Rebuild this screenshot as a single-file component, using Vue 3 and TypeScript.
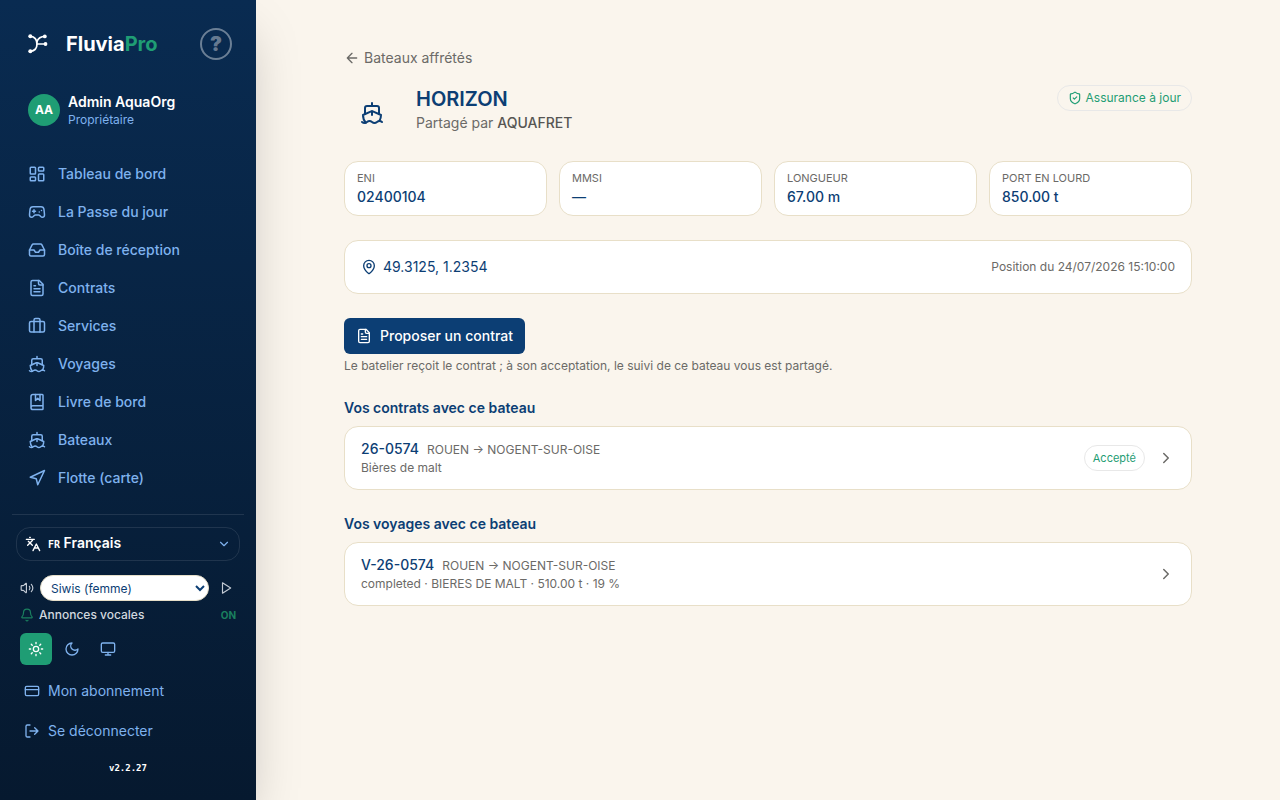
<script setup lang="ts">
import { ref } from 'vue'

interface NavItem {
  label: string
  icon: string
}

interface Spec {
  label: string
  value: string
}

const icons: Record<string, string> = {
  dashboard:
    '<rect width="7" height="9" x="3" y="3" rx="1"/><rect width="7" height="5" x="14" y="3" rx="1"/><rect width="7" height="9" x="14" y="12" rx="1"/><rect width="7" height="5" x="3" y="16" rx="1"/>',
  gamepad:
    '<path d="M6 11h4M8 9v4M15 12h.01M18 10h.01"/><path d="M17.32 5H6.68a4 4 0 0 0-3.978 3.59c-.006.052-.01.101-.017.152C2.604 9.416 2 14.456 2 16a3 3 0 0 0 3 3c1 0 1.5-.5 2-1l1.414-1.414A2 2 0 0 1 9.828 16h4.344a2 2 0 0 1 1.414.586L17 18c.5.5 1 1 2 1a3 3 0 0 0 3-3c0-1.545-.604-6.584-.685-7.258-.007-.05-.011-.1-.017-.151A4 4 0 0 0 17.32 5z"/>',
  inbox:
    '<path d="M22 12h-6l-2 3h-4l-2-3H2"/><path d="M5.45 5.11 2 12v6a2 2 0 0 0 2 2h16a2 2 0 0 0 2-2v-6l-3.45-6.89A2 2 0 0 0 16.76 4H7.24a2 2 0 0 0-1.79 1.11z"/>',
  file:
    '<path d="M15 2H6a2 2 0 0 0-2 2v16a2 2 0 0 0 2 2h12a2 2 0 0 0 2-2V7Z"/><path d="M14 2v4a2 2 0 0 0 2 2h4M10 9H8M16 13H8M16 17H8"/>',
  luggage:
    '<path d="M16 20V4a2 2 0 0 0-2-2h-4a2 2 0 0 0-2 2v16"/><rect width="20" height="14" x="2" y="6" rx="2"/>',
  ship:
    '<path d="M12 10.189V14M12 2v3M19 13V7a2 2 0 0 0-2-2H7a2 2 0 0 0-2 2v6"/><path d="M19.38 20A11.6 11.6 0 0 0 21 14l-8.188-3.639a2 2 0 0 0-1.624 0L3 14a11.6 11.6 0 0 0 2.81 7.76"/><path d="M2 21c.6.5 1.2 1 2.5 1 2.5 0 2.5-2 5-2 1.3 0 1.9.5 2.5 1s1.2 1 2.5 1c2.5 0 2.5-2 5-2 1.3 0 1.9.5 2.5 1"/>',
  book:
    '<path d="M10 2v8l3-3 3 3V2"/><path d="M4 19.5v-15A2.500 2.500 0 0 1 6.500 2H19a1 1 0 0 1 1 1v18a1 1 0 0 1-1 1H6.500a1 1 0 0 1 0-5H20"/>',
  navigation: '<path d="M3 11 22 2l-9 19-2-8z"/>',
  languages: '<path d="m5 8 6 6M4 14l6-6 2-3M2 5h12M7 2h1M22 22l-5-10-5 10M14 18h6"/>',
  chevronDown: '<path d="m6 9 6 6 6-6"/>',
  chevronRight: '<path d="m9 18 6-6-6-6"/>',
  volume:
    '<path d="M11 4.702a.705.705 0 0 0-1.203-.498L6.413 7.587A1.400 1.400 0 0 1 5.416 8H3a1 1 0 0 0-1 1v6a1 1 0 0 0 1 1h2.416a1.400 1.400 0 0 1 .997.413l3.383 3.384A.705.705 0 0 0 11 19.298z"/><path d="M16 9a5 5 0 0 1 0 6M19.364 18.364a9 9 0 0 0 0-12.728"/>',
  play: '<path d="M6 3l14 9-14 9z"/>',
  bell:
    '<path d="M10.268 21a2 2 0 0 0 3.464 0"/><path d="M3.262 15.326A1 1 0 0 0 4 17h16a1 1 0 0 0 .74-1.673C19.410 13.956 18 12.499 18 8A6 6 0 0 0 6 8c0 4.499-1.411 5.956-2.738 7.326"/>',
  sun:
    '<circle cx="12" cy="12" r="4"/><path d="M12 2v2M12 20v2M4.930 4.930l1.410 1.410M17.660 17.660l1.410 1.410M2 12h2M20 12h2M6.340 17.660l-1.410 1.410M19.070 4.930l-1.410 1.410"/>',
  moon: '<path d="M12 3a6 6 0 0 0 9 9 9 9 0 1 1-9-9Z"/>',
  monitor: '<rect width="20" height="14" x="2" y="3" rx="2"/><path d="M8 21h8M12 17v4"/>',
  card: '<rect width="20" height="14" x="2" y="5" rx="2"/><path d="M2 10h20"/>',
  logout: '<path d="M9 21H5a2 2 0 0 1-2-2V5a2 2 0 0 1 2-2h4M16 17l5-5-5-5M21 12H9"/>',
  arrowLeft: '<path d="m12 19-7-7 7-7M19 12H5"/>',
  shield:
    '<path d="M20 13c0 5-3.500 7.500-7.660 8.950a1 1 0 0 1-.670-.010C7.500 20.500 4 18 4 13V6a1 1 0 0 1 1-1c2 0 4.500-1.200 6.240-2.720a1.170 1.170 0 0 1 1.520 0C14.510 3.810 17 5 19 5a1 1 0 0 1 1 1z"/><path d="m9 12 2 2 4-4"/>',
  pin:
    '<path d="M20 10c0 4.993-5.539 10.193-7.399 11.799a1 1 0 0 1-1.202 0C9.539 20.193 4 14.993 4 10a8 8 0 0 1 16 0"/><circle cx="12" cy="10" r="3"/>',
}

const navItems: NavItem[] = [
  { label: 'Tableau de bord', icon: 'dashboard' },
  { label: 'La Passe du jour', icon: 'gamepad' },
  { label: 'Boîte de réception', icon: 'inbox' },
  { label: 'Contrats', icon: 'file' },
  { label: 'Services', icon: 'luggage' },
  { label: 'Voyages', icon: 'ship' },
  { label: 'Livre de bord', icon: 'book' },
  { label: 'Bateaux', icon: 'ship' },
  { label: 'Flotte (carte)', icon: 'navigation' },
]

const themes = [
  { id: 'light', label: 'Clair', icon: 'sun' },
  { id: 'dark', label: 'Sombre', icon: 'moon' },
  { id: 'system', label: 'Système', icon: 'monitor' },
]

const specs: Spec[] = [
  { label: 'ENI', value: '02400104' },
  { label: 'MMSI', value: '—' },
  { label: 'LONGUEUR', value: '67.00 m' },
  { label: 'PORT EN LOURD', value: '850.00 t' },
]

const theme = ref('light')
const voice = ref('siwis')
const announcements = ref(true)
</script>

<template>
  <div class="layout">
    <aside class="sidebar">
      <header class="brand-row">
        <a class="brand" href="#">
          <svg class="logo" viewBox="0 0 20 20" aria-hidden="true">
            <g fill="none" stroke="currentColor" stroke-width="1.7" stroke-linecap="round">
              <path d="M2.300 2.200C6 2.800 9 5.500 9 10c0 4.500-3 7-6.700 7.300" />
              <path d="M17 2.400C13 2.400 10 4.500 8.800 8M9 10h8.700" />
            </g>
            <g fill="currentColor">
              <circle cx="2.300" cy="2.300" r="2" />
              <circle cx="16.800" cy="2.400" r="1.900" />
              <circle cx="17.500" cy="10" r="1.900" />
              <circle cx="2.300" cy="17.300" r="2" />
            </g>
          </svg>
          <span class="brand-name">Fluvia<span class="brand-accent">Pro</span></span>
        </a>
        <button class="help" type="button" aria-label="Aide">?</button>
      </header>

      <div class="user">
        <span class="avatar">AA</span>
        <div>
          <div class="user-name">Admin AquaOrg</div>
          <div class="user-role">Propriétaire</div>
        </div>
      </div>

      <nav class="nav">
        <a v-for="item in navItems" :key="item.label" class="nav-item" href="#">
          <svg class="icon i18" viewBox="0 0 24 24" v-html="icons[item.icon]"></svg>
          {{ item.label }}
        </a>
      </nav>

      <div class="tools">
        <button class="lang" type="button">
          <svg class="icon i16" viewBox="0 0 24 24" v-html="icons.languages"></svg>
          <span class="lang-text"><span class="lang-code">FR</span> Français</span>
          <svg class="icon i14 lang-chevron" viewBox="0 0 24 24" v-html="icons.chevronDown"></svg>
        </button>

        <div class="voice">
          <svg class="icon i14" viewBox="0 0 24 24" v-html="icons.volume"></svg>
          <select v-model="voice" class="voice-select" aria-label="Voix">
            <option value="siwis">Siwis (femme)</option>
          </select>
          <button class="play" type="button" aria-label="Écouter">
            <svg class="icon i14" viewBox="0 0 24 24" v-html="icons.play"></svg>
          </button>
        </div>

        <button class="announce" type="button" @click="announcements = !announcements">
          <svg class="icon i14 green" viewBox="0 0 24 24" v-html="icons.bell"></svg>
          <span>Annonces vocales</span>
          <span class="state">{{ announcements ? 'ON' : 'OFF' }}</span>
        </button>

        <div class="themes">
          <button
            v-for="t in themes"
            :key="t.id"
            type="button"
            class="theme"
            :class="{ active: theme === t.id }"
            :aria-label="t.label"
            @click="theme = t.id"
          >
            <svg class="icon i16" viewBox="0 0 24 24" v-html="icons[t.icon]"></svg>
          </button>
        </div>

        <a class="account" href="#">
          <svg class="icon i16" viewBox="0 0 24 24" v-html="icons.card"></svg>
          Mon abonnement
        </a>
        <button class="account" type="button">
          <svg class="icon i16" viewBox="0 0 24 24" v-html="icons.logout"></svg>
          Se déconnecter
        </button>
        <div class="version">v2.2.27</div>
      </div>
    </aside>

    <main class="main">
      <div class="content">
        <a class="back" href="#">
          <svg class="icon i16" viewBox="0 0 24 24" v-html="icons.arrowLeft"></svg>
          Bateaux affrétés
        </a>

        <header class="boat">
          <span class="boat-icon">
            <svg class="icon i24" viewBox="0 0 24 24" v-html="icons.ship"></svg>
          </span>
          <div class="boat-title">
            <h1>HORIZON</h1>
            <p>Partagé par <strong>AQUAFRET</strong></p>
          </div>
          <span class="badge insurance">
            <svg class="icon i14" viewBox="0 0 24 24" v-html="icons.shield"></svg>
            Assurance à jour
          </span>
        </header>

        <dl class="specs">
          <div v-for="s in specs" :key="s.label" class="card spec">
            <dt>{{ s.label }}</dt>
            <dd>{{ s.value }}</dd>
          </div>
        </dl>

        <section class="card position">
          <svg class="icon i16" viewBox="0 0 24 24" v-html="icons.pin"></svg>
          <span class="coords">49.3125, 1.2354</span>
          <span class="position-date">Position du 24/07/2026 15:10:00</span>
        </section>

        <button class="primary" type="button">
          <svg class="icon i16" viewBox="0 0 24 24" v-html="icons.file"></svg>
          Proposer un contrat
        </button>
        <p class="hint">Le batelier reçoit le contrat ; à son acceptation, le suivi de ce bateau vous est partagé.</p>

        <section class="group">
          <h2>Vos contrats avec ce bateau</h2>
          <a class="card row" href="#">
            <div class="row-body">
              <div class="row-head">
                <span class="ref">26-0574</span>
                <span class="route">ROUEN → NOGENT-SUR-OISE</span>
              </div>
              <div class="detail">Bières de malt</div>
            </div>
            <span class="badge status">Accepté</span>
            <svg class="icon i18" viewBox="0 0 24 24" v-html="icons.chevronRight"></svg>
          </a>
        </section>

        <section class="group">
          <h2>Vos voyages avec ce bateau</h2>
          <a class="card row" href="#">
            <div class="row-body">
              <div class="row-head">
                <span class="ref">V-26-0574</span>
                <span class="route">ROUEN → NOGENT-SUR-OISE</span>
              </div>
              <div class="detail">completed · BIERES DE MALT · 510.00 t · 19 %</div>
            </div>
            <svg class="icon i18" viewBox="0 0 24 24" v-html="icons.chevronRight"></svg>
          </a>
        </section>
      </div>
    </main>
  </div>
</template>

<style>
body {
  margin: 0;
  background: #faf5ed;
}
</style>

<style scoped>
.layout {
  display: flex;
  min-height: 100vh;
  background: #faf5ed;
  font-family: Inter, "Liberation Sans", sans-serif;
  font-size: 14px;
  line-height: 20px;
  color: #6b6a67;
}

.layout *,
.layout *::before {
  box-sizing: border-box;
}

button,
select {
  font: inherit;
  color: inherit;
  margin: 0;
  padding: 0;
  border: 0;
  background: none;
  cursor: pointer;
}

a {
  color: inherit;
  text-decoration: none;
}

h1,
h2,
p,
dl,
dd {
  margin: 0;
}

.icon {
  flex: none;
  display: block;
  fill: none;
  stroke: currentColor;
  stroke-width: 2;
  stroke-linecap: round;
  stroke-linejoin: round;
}

.i14 {
  width: 14px;
  height: 14px;
}

.i16 {
  width: 16px;
  height: 16px;
}

.i18 {
  width: 18px;
  height: 18px;
}

.i24 {
  width: 24px;
  height: 24px;
}

.sidebar {
  position: sticky;
  top: 0;
  flex: none;
  display: flex;
  flex-direction: column;
  width: 256px;
  height: 100vh;
  color: #7fb2ee;
  background: linear-gradient(180deg, #092b51 0%, #06192f 100%);
  box-shadow: 0 25px 50px -12px rgba(0, 0, 0, 0.25);
}

.brand-row {
  display: flex;
  align-items: center;
  justify-content: space-between;
  padding: 28px 24px 28px 28px;
}

.brand {
  display: flex;
  align-items: center;
  gap: 18px;
  color: #ffffff;
}

.logo {
  width: 20px;
  height: 20px;
}

.brand-name {
  font-size: 20px;
  font-weight: 700;
  line-height: 28px;
}

.brand-accent {
  color: #1f9d74;
}

.help {
  width: 32px;
  height: 32px;
  border: 2px solid rgba(255, 255, 255, 0.4);
  border-radius: 50%;
  color: rgba(255, 255, 255, 0.4);
  font-size: 20px;
  font-weight: 900;
  line-height: 28px;
}

.user {
  display: flex;
  align-items: center;
  gap: 8px;
  padding: 4px 28px;
}

.avatar {
  display: flex;
  align-items: center;
  justify-content: center;
  width: 32px;
  height: 32px;
  border-radius: 50%;
  color: #ffffff;
  background: #1f9d74;
  font-size: 12px;
  font-weight: 700;
}

.user-name {
  color: #ffffff;
  font-weight: 600;
}

.user-role {
  font-size: 12px;
  line-height: 16px;
}

.nav {
  flex: 1;
  display: flex;
  flex-direction: column;
  gap: 2px;
  padding: 24px 12px 0;
}

.nav-item {
  display: flex;
  align-items: center;
  gap: 12px;
  height: 36px;
  padding: 0 16px;
  font-weight: 500;
}

.tools {
  display: flex;
  flex-direction: column;
  margin: 0 12px;
  padding: 12px 4px 24px;
  border-top: 1px solid rgba(255, 255, 255, 0.1);
}

.lang {
  display: flex;
  align-items: center;
  gap: 7px;
  height: 34px;
  padding: 0 8px;
  border: 1px solid rgba(255, 255, 255, 0.1);
  border-radius: 14px;
  color: #ffffff;
}

.lang-text {
  font-weight: 600;
}

.lang-code {
  font-family: "DejaVu Sans Mono", monospace;
  font-size: 10px;
  font-weight: 700;
}

.lang-chevron {
  margin-left: auto;
  color: #7fb2ee;
}

.voice {
  display: flex;
  align-items: center;
  gap: 6px;
  margin-top: 14px;
  padding: 0 4px;
  color: #c3cad4;
}

.voice-select {
  flex: 1;
  min-width: 0;
  height: 26px;
  padding: 0 0 0 6px;
  border: 1px solid #e6dfca;
  border-radius: 13px;
  color: #0c3e74;
  background: #ffffff;
  font-size: 12px;
}

.play {
  display: flex;
  align-items: center;
  justify-content: center;
  width: 21px;
  height: 24px;
}

.announce {
  display: flex;
  align-items: center;
  gap: 5px;
  padding: 4px 4px;
  color: #d2d8df;
  font-size: 12px;
  font-weight: 500;
}

.green,
.state {
  color: #1a805f;
}

.state {
  margin-left: auto;
  font-size: 10px;
  font-weight: 700;
}

.themes {
  display: flex;
  gap: 4px;
  margin-top: 4px;
  padding: 0 4px;
}

.theme {
  display: flex;
  align-items: center;
  justify-content: center;
  width: 32px;
  height: 32px;
  border-radius: 6px;
}

.theme.active {
  color: #ffffff;
  background: #1f9d74;
}

.account {
  display: flex;
  align-items: center;
  gap: 8px;
  height: 36px;
  margin-top: 4px;
  padding: 0 8px;
  text-align: left;
}

.themes + .account {
  margin-top: 8px;
}

.version {
  margin-top: 11px;
  color: #ffffff;
  font-family: "DejaVu Sans Mono", monospace;
  font-size: 9px;
  font-weight: 700;
  line-height: 16px;
  text-align: center;
}

.main {
  flex: 1;
  min-width: 0;
}

.content {
  max-width: 896px;
  box-sizing: border-box;
  margin: 0 auto;
  padding: 48px 24px;
}

.back {
  display: flex;
  align-items: center;
  gap: 4px;
  width: fit-content;
}

.boat {
  display: flex;
  align-items: flex-start;
  gap: 16px;
  margin-top: 17px;
}

.boat-icon {
  display: flex;
  align-items: center;
  justify-content: center;
  width: 56px;
  height: 56px;
  color: #0c3e74;
}

.boat-title {
  flex: 1;
}

h1 {
  color: #0c3e74;
  font-size: 20px;
  font-weight: 600;
  line-height: 28px;
}

.boat-title strong {
  color: #565553;
  font-weight: 500;
}

.badge {
  display: flex;
  align-items: center;
  gap: 4px;
  height: 26px;
  border: 1px solid #e8e8e8;
  border-radius: 13px;
  color: #1f9d74;
}

.insurance {
  padding: 0 10px;
  font-size: 12px;
}

.status {
  padding: 0 8px;
  font-size: 11px;
}

.card {
  border: 1px solid #e8dfc8;
  border-radius: 14px;
  background: #ffffff;
}

.specs {
  display: grid;
  grid-template-columns: repeat(4, 1fr);
  gap: 12px;
  margin-top: 20px;
}

.spec {
  padding: 8px 12px;
}

.spec dt {
  font-size: 11px;
  line-height: 17px;
}

.spec dd {
  color: #0c3e74;
  font-weight: 500;
}

.position {
  display: flex;
  align-items: center;
  gap: 6px;
  margin-top: 24px;
  padding: 16px;
  color: #0c3e74;
}

.position-date {
  margin-left: auto;
  color: #6b6a67;
  font-size: 12px;
}

.primary {
  display: flex;
  align-items: center;
  gap: 8px;
  height: 36px;
  margin-top: 24px;
  padding: 0 12px;
  border-radius: 6px;
  color: #ffffff;
  background: #0c3e74;
  font-weight: 500;
}

.hint {
  margin-top: 4px;
  font-size: 12px;
  line-height: 16px;
}

.group {
  margin-top: 24px;
}

h2 {
  margin-bottom: 8px;
  color: #0c3e74;
  font-size: 14px;
  font-weight: 600;
}

.row {
  display: flex;
  align-items: center;
  gap: 12px;
  padding: 12px 16px;
}

.row-body {
  flex: 1;
}

.row-head {
  display: flex;
  align-items: baseline;
  gap: 8px;
}

.ref {
  color: #0c3e74;
  font-weight: 500;
}

.route,
.detail {
  font-size: 12px;
  line-height: 18px;
}
</style>
